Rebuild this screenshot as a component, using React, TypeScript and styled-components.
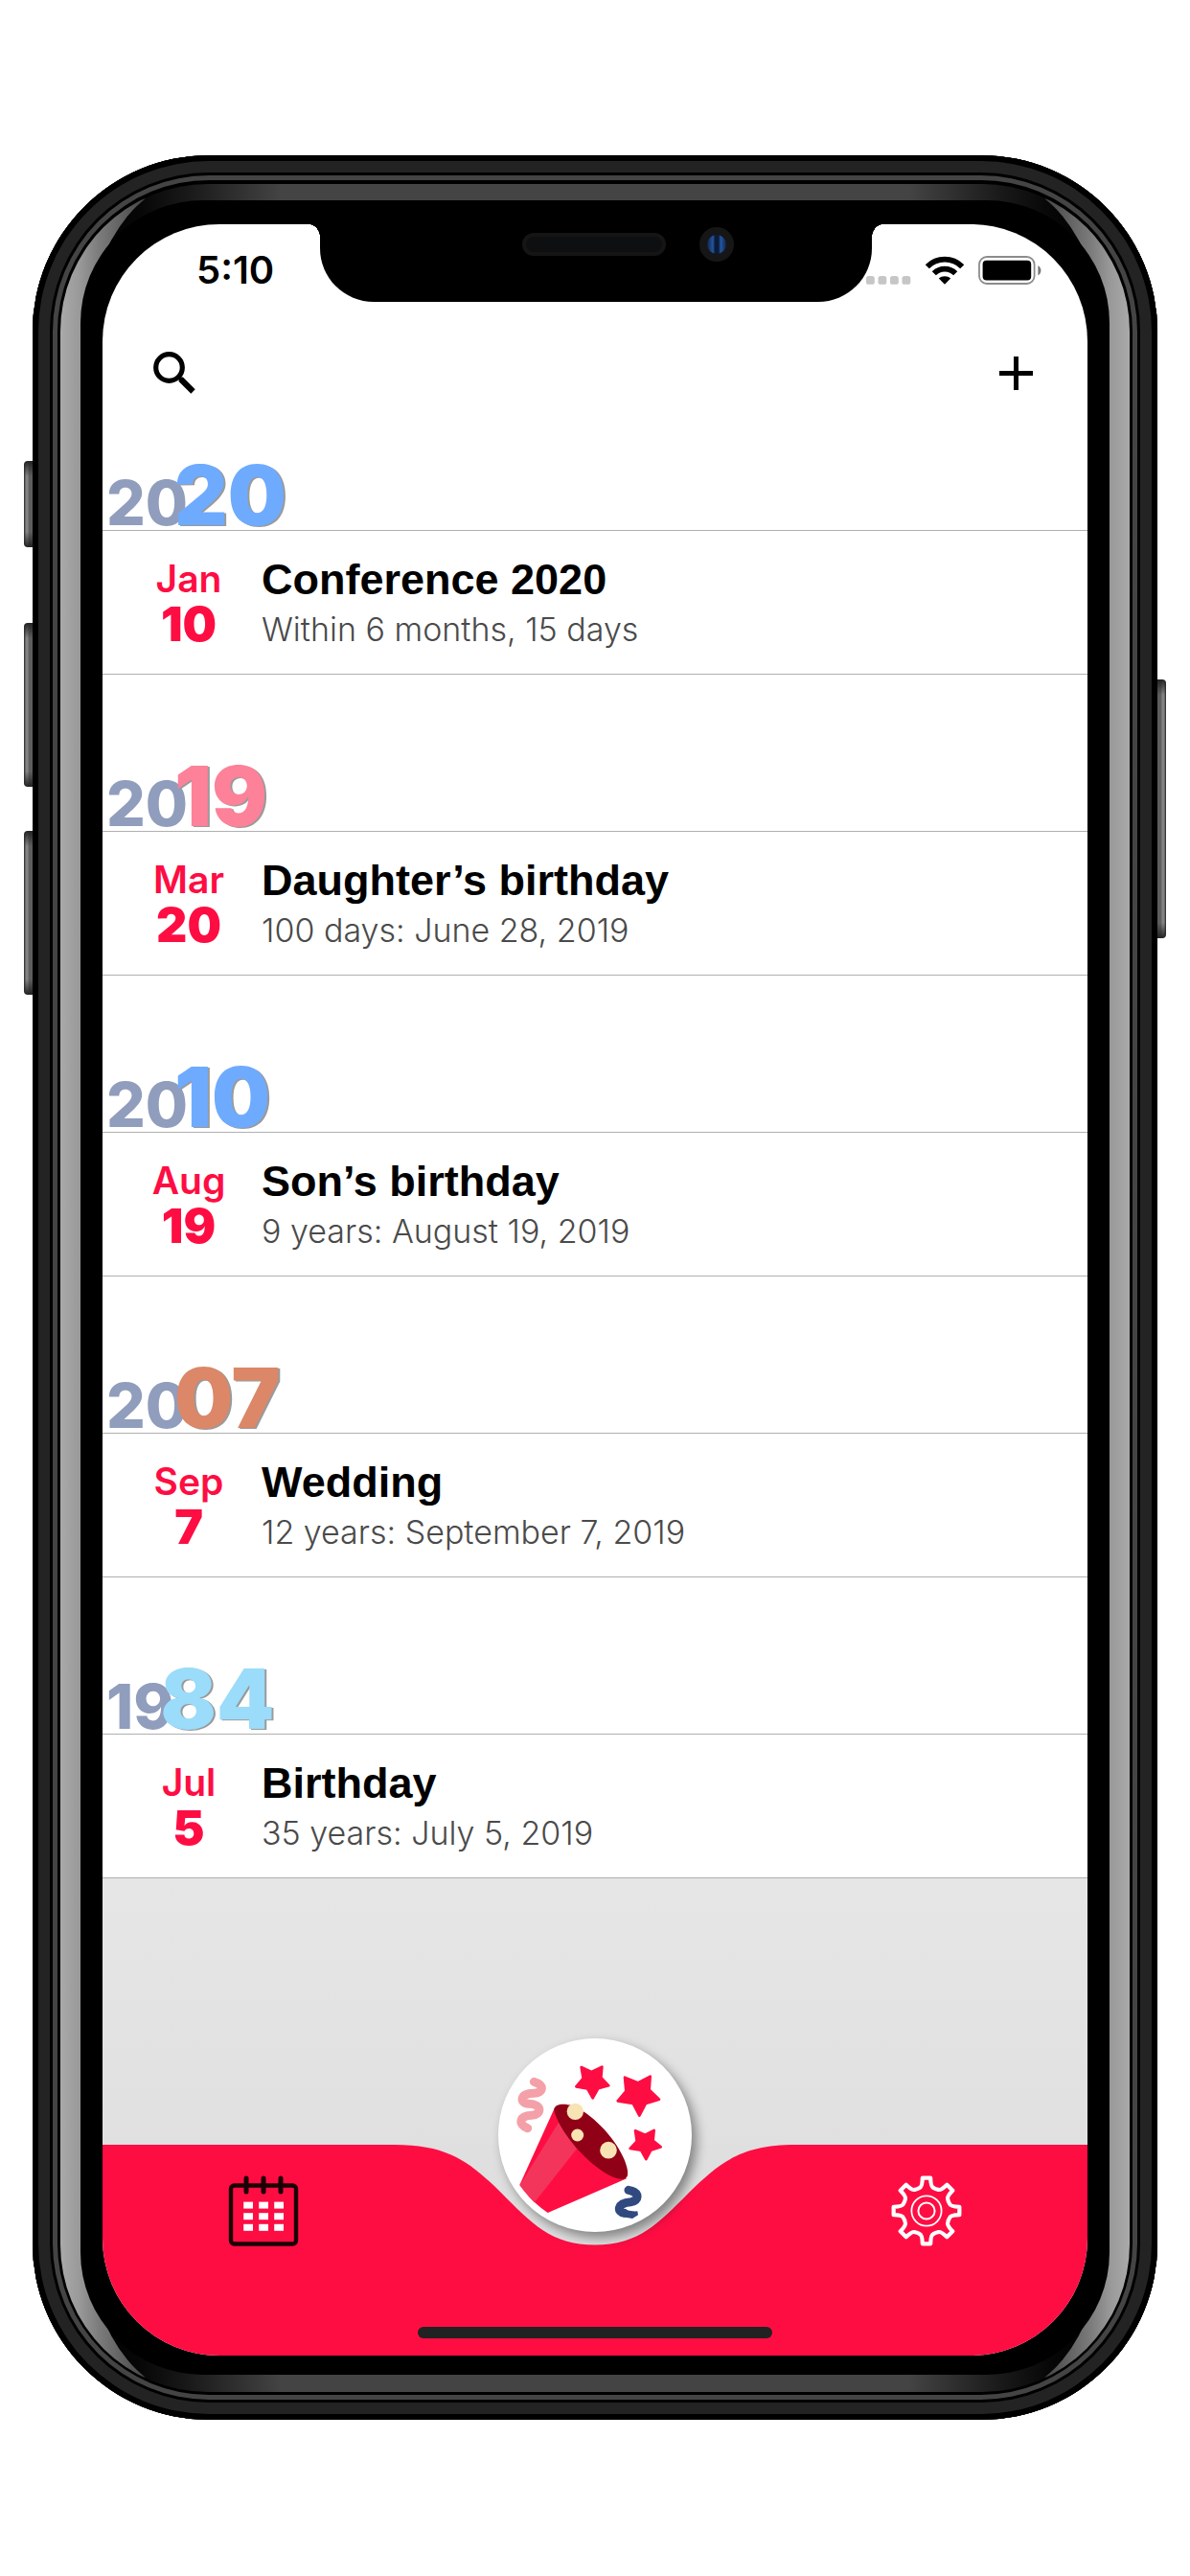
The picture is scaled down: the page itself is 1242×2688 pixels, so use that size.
import React from "react";
import styled, { createGlobalStyle } from "styled-components";

const RED = "#fe0d43";
const UI = `Inter, "Liberation Sans", sans-serif`;
const HELV = `"Liberation Sans", Arial, sans-serif`;

const GlobalStyle = createGlobalStyle`
  *, *::before, *::after { box-sizing: border-box; }
  body { margin: 0; background: #fff; }
  h2, h3, p, ul { margin: 0; padding: 0; }
  ul { list-style: none; }
  button { border: 0; padding: 0; background: none; cursor: pointer; }
  svg { display: block; }
`;

/* ---------- device ---------- */

const Page = styled.div`
  display: flex;
  justify-content: center;
  padding: 162px 34px;
`;

const Device = styled.div`
  position: relative;
  width: 100%;
  max-width: 1174px;
  padding: 72px 73px 67px;
  border-radius: 184px;
  background: #000;
  box-shadow: inset 0 0 0 6px #000, inset 0 0 0 18px #232323, inset 0 0 0 21px #000,
    inset 0 0 0 26px #444, inset 0 0 0 30px #000;
`;

/* Polished rim: bright on the long sides, tapering off into the corners. */
const Gloss = styled.div`
  position: absolute;
  inset: 30px 29px 29px;
  overflow: hidden;
  border-radius: 154px;
  background: linear-gradient(
    to right,
    #aaa 0, #999 20px, #7c7c7c 40px, #484848 86px, #000 90px,
    #000 calc(100% - 90px), #484848 calc(100% - 86px), #7c7c7c calc(100% - 40px),
    #999 calc(100% - 20px), #aaa 100%
  );
  &::before {
    content: "";
    position: absolute;
    inset: 0 21px;
    border-radius: 110px / 200px;
    background: linear-gradient(
      to right,
      #000 0, #060606 60px, #181818 110px, #444 210px,
      #444 calc(100% - 210px), #181818 calc(100% - 110px), #060606 calc(100% - 60px), #000 100%
    );
  }
`;

const Bezel = styled.div`
  position: absolute;
  inset: 47px 50px;
  border-radius: 128px;
  background: #000;
`;

const SideKey = styled.span<{ $side: "left" | "right"; $top: number; $length: number }>`
  position: absolute;
  top: ${(p) => p.$top}px;
  ${(p) => p.$side}: -9px;
  width: 9px;
  height: ${(p) => p.$length}px;
  border-radius: ${(p) => (p.$side === "left" ? "4px 0 0 4px" : "0 4px 4px 0")};
  background: linear-gradient(#222 0, transparent 16px, transparent calc(100% - 16px), #222 100%),
    linear-gradient(to ${(p) => p.$side}, #5c5c5c 0, #606060 4px, #858585 5px, #808080 7px, #222 9px);
`;

const Screen = styled.main`
  position: relative;
  display: flex;
  flex-direction: column;
  overflow: hidden;
  border-radius: 122px;
  background: #fff;
`;

/* ---------- status bar and notch ---------- */

const StatusBar = styled.header`
  position: relative;
  display: flex;
  justify-content: space-between;
  align-items: center;
  height: 81px;
  padding: 14px 48px 0 98px;
`;

const Clock = styled.time`
  font: 600 40px/48px ${UI};
  color: #000;
`;

const StatusIcons = styled.div`
  display: flex;
  align-items: center;
  gap: 15px;
`;

const Notch = styled.div`
  position: absolute;
  top: 0;
  left: 50%;
  width: 576px;
  height: 81px;
  margin-left: -287px;
  border-radius: 0 0 56px 56px;
  background: #000;
  &::before,
  &::after {
    content: "";
    position: absolute;
    top: 0;
    width: 12px;
    height: 14px;
  }
  &::before {
    right: 100%;
    background: radial-gradient(ellipse 12px 14px at 0 100%, transparent 98%, #000 100%);
  }
  &::after {
    left: 100%;
    background: radial-gradient(ellipse 12px 14px at 100% 100%, transparent 98%, #000 100%);
  }
`;

const Speaker = styled.span`
  position: absolute;
  top: 9px;
  left: 211px;
  width: 150px;
  height: 24px;
  border: 4px solid #151515;
  border-radius: 12px;
  background: #0e0f11;
`;

const Camera = styled.span`
  position: absolute;
  top: 3px;
  left: 396px;
  width: 36px;
  height: 36px;
  border: 8px solid #161616;
  border-radius: 50%;
  background: linear-gradient(to right, #0f2448 0, #2455a0 30%, #0a1a38 42%, #0a1a38 58%, #2455a0 72%, #0f2448 100%);
`;

/* ---------- toolbar ---------- */

const Toolbar = styled.div`
  display: flex;
  justify-content: space-between;
  align-items: center;
  height: 148px;
  padding: 0 53px;
`;

/* ---------- event list ---------- */

const List = styled.div`
  display: flex;
  flex-direction: column;
  gap: 73px;
`;

const YearHeader = styled.h2`
  display: flex;
  flex-direction: column;
  justify-content: flex-end;
  height: 91px;
  padding-left: 4px;
  border-bottom: 1px solid #b0b0b0;
  font: 900 86px/72px ${UI};
`;

const Century = styled.span`
  font-size: 64px;
  font-weight: 800;
  line-height: 48px;
  color: #909dbc;
`;

const Decade = styled.span<{ $color: string }>`
  position: relative;
  margin-left: -14px;
  color: ${(p) => p.$color};
  text-shadow: 2px 1px 0 #9a9a9a;
`;

const EventRow = styled.li`
  display: flex;
  gap: 26px;
  height: 150px;
  padding: 27px 40px 0;
  border-bottom: 1px solid #b0b0b0;
`;

const DateBox = styled.time`
  display: flex;
  flex-direction: column;
  align-items: center;
  width: 100px;
  font-family: ${UI};
  color: ${RED};
`;

const Month = styled.span`
  font-size: 39px;
  font-weight: 600;
  line-height: 46px;
`;

const Day = styled.span`
  font-size: 50px;
  font-weight: 900;
  line-height: 48px;
`;

const Title = styled.h3`
  font: 700 45px/48px ${HELV};
  color: #000;
`;

const Detail = styled.p`
  font: 300 34px/56px ${UI};
  color: #4a4a4a;
`;

const Filler = styled.div`
  height: 278px;
  background: linear-gradient(#e6e6e6, #e0e0e0);
`;

/* ---------- tab bar ---------- */

const TabBar = styled.nav`
  position: relative;
  display: flex;
  flex-direction: column;
  justify-content: space-between;
  align-items: center;
  height: 220px;
  padding-bottom: 18px;
  background: ${RED};
`;

const Dip = styled.svg`
  position: absolute;
  top: 0;
  left: 50%;
  margin-left: -209px;
`;

const Tabs = styled.ul`
  position: relative;
  display: flex;
  justify-content: space-between;
  align-items: flex-start;
  width: 100%;
  padding: 0 131px;
`;

const Tab = styled.li`
  padding-top: 31px;
`;

const CenterTab = styled.li`
  height: 90px;
  margin-top: -111px;
`;

const PartyButton = styled.button`
  width: 202px;
  height: 202px;
  border-radius: 50%;
  background: #fff;
  overflow: hidden;
  box-shadow: 5px 6px 12px rgba(0, 0, 0, 0.42);
`;

const HomeIndicator = styled.span`
  width: 370px;
  height: 12px;
  border-radius: 6px;
  background: #222;
`;

/* ---------- drawings ---------- */

const SignalDots = () => (
  <svg width="47" height="30" viewBox="0 0 47 30" fill="#c6c6c6" aria-hidden="true">
    {[0, 12.5, 25, 37.5].map((x) => (
      <rect key={x} x={x} y="21" width="8.8" height="8.8" rx="2.6" />
    ))}
  </svg>
);

const Wifi = () => (
  <svg width="40" height="30" viewBox="0 0 40 30" aria-hidden="true">
    <g fill="none" stroke="#000" strokeWidth="5.8">
      <path d="M1.8 11.2A25.6 25.6 0 0 1 38.2 11.2" />
      <path d="M8.8 18.2A15.8 15.8 0 0 1 31.2 18.2" />
    </g>
    <path d="M20 29.8L13.8 23.6C17.2 20.4 22.8 20.4 26.2 23.6Z" />
  </svg>
);

const Battery = () => (
  <svg width="66" height="30" viewBox="0 0 66 30" aria-hidden="true">
    <rect x="1" y="1" width="57.6" height="28" rx="8" fill="none" stroke="#8c8c8c" strokeWidth="1.8" />
    <rect x="4.6" y="4.8" width="50.6" height="20.8" rx="4" />
    <path d="M62.4 10.2C66.4 12 66.4 18.4 62.4 20.2Z" fill="#777" />
  </svg>
);

const SearchIcon = () => (
  <svg width="44" height="44" viewBox="0 0 44 44" fill="none" stroke="#000" aria-hidden="true">
    <circle cx="16.5" cy="16.5" r="13.8" strokeWidth="5.2" />
    <path d="M28.500 28.500L41.500 41.500" strokeWidth="6.2" />
    <path d="M26 26L30 30" strokeWidth="4" />
  </svg>
);

const PlusIcon = () => (
  <svg width="44" height="44" viewBox="0 0 44 44" stroke="#000" strokeWidth="5" aria-hidden="true">
    <path d="M22.5 5V40M5 22.5H40" />
  </svg>
);

const CalendarIcon = () => (
  <svg width="74" height="76" viewBox="0 0 74 76" aria-hidden="true">
    <rect x="3" y="11.5" width="68" height="61" rx="3.5" fill="none" stroke="#1a0006" strokeWidth="4.4" />
    <path d="M19 4V18M37 4V18M55 4V18" stroke="#1a0006" strokeWidth="5" strokeLinecap="round" />
    {[28.6, 40.2, 51.8].map((y) =>
      [16.2, 32.2, 48.2].map((x) => (
        <rect key={`${x}-${y}`} x={x} y={y} width="9.8" height="7" fill="#fff" />
      ))
    )}
  </svg>
);

function gearPath(c: number) {
  const at = (r: number, deg: number) => {
    const a = (deg * Math.PI) / 180;
    return `${(c + r * Math.sin(a)).toFixed(2)} ${(c - r * Math.cos(a)).toFixed(2)}`;
  };
  let d = "";
  for (let i = 0; i < 8; i++) {
    const t = i * 45;
    d += `${i === 0 ? "M" : "L"}${at(34.6, t - 7)}L${at(34.6, t + 7)}`;
    d += `C${at(29, t + 8.5)} ${at(25.4, t + 12)} ${at(25.2, t + 17)}`;
    d += `Q${at(24.6, t + 22.5)} ${at(25.2, t + 28)}`;
    d += `C${at(25.4, t + 33)} ${at(29, t + 36.5)} ${at(34.6, t + 38)}`;
  }
  return d + "Z";
}

const GearIcon = () => (
  <svg width="74" height="76" viewBox="0 -1 74 76" fill="none" stroke="#fff" aria-hidden="true">
    <path d={gearPath(37)} strokeWidth="4.2" strokeLinejoin="round" />
    <circle cx="37" cy="37" r="15.6" strokeWidth="1.8" />
    <circle cx="37" cy="37" r="8.6" strokeWidth="2" />
  </svg>
);

const PartyIcon = () => (
  <svg width="202" height="202" viewBox="120 141 606 606" aria-hidden="true">
    <path d="M297 358L187 600Q228 656 275 687L522 580Z" fill={RED} />
    <path d="M309 404L188 600Q208 630 233 655L366 487Z" fill="#f3355c" />
    <path
      d="M295 364C297 346 325 344 352 352C410 374 480 446 511 512C524 540 527 558 525 570C520 588 492 584 462 566C400 530 345 466 316 416C302 390 296 374 295 364Z"
      fill="#900016"
    />
    <g fill="#f8e3b4">
      <circle cx="361" cy="370" r="26" />
      <circle cx="368" cy="444" r="19.5" />
      <circle cx="465" cy="491" r="26.5" />
    </g>
    <g fill={RED} stroke={RED} strokeWidth="8" strokeLinejoin="round">
      <path d="M445 230L442 264L466 289L433 298L416 328L399 298L364 292L386 266L380 231L412 246Z" />
      <path d="M596 260L593 302L624 332L582 345L562 383L542 345L494 337L520 306L516 263L557 280Z" />
      <path d="M608 429L605 461L629 481L598 491L583 519L567 491L533 486L554 463L549 430L580 443Z" />
    </g>
    <path
      d="M232 277C266 286 262 312 232 313C186 312 186 345 216 346C260 347 256 380 225 382C184 383 182 411 212 422"
      fill="none"
      stroke="#f4a0a8"
      strokeWidth="27"
      strokeLinecap="round"
    />
    <path
      d="M528 616C564 622 562 650 535 653C490 656 492 686 515 688"
      fill="none"
      stroke="#30497f"
      strokeWidth="27"
      strokeLinecap="round"
    />
    <path d="M510 675Q535 684 556 682L558 694L540 705L510 700Z" fill="#30497f" />
  </svg>
);

/* ---------- data ---------- */

interface LifeEvent {
  year: string;
  color: string;
  month: string;
  day: string;
  iso: string;
  title: string;
  detail: string;
}

const events: LifeEvent[] = [
  { year: "2020", color: "#6eabff", month: "Jan", day: "10", iso: "2020-01-10", title: "Conference 2020", detail: "Within 6 months, 15 days" },
  { year: "2019", color: "#fd8198", month: "Mar", day: "20", iso: "2019-03-20", title: "Daughter’s birthday", detail: "100 days: June 28, 2019" },
  { year: "2010", color: "#6eabff", month: "Aug", day: "19", iso: "2010-08-19", title: "Son’s birthday", detail: "9 years: August 19, 2019" },
  { year: "2007", color: "#db8768", month: "Sep", day: "7", iso: "2007-09-07", title: "Wedding", detail: "12 years: September 7, 2019" },
  { year: "1984", color: "#9adcfa", month: "Jul", day: "5", iso: "1984-07-05", title: "Birthday", detail: "35 years: July 5, 2019" },
];

export default function App() {
  return (
    <>
      <GlobalStyle />
      <Page>
        <Device>
          <SideKey $side="left" $top={319} $length={90} />
          <SideKey $side="left" $top={488} $length={171} />
          <SideKey $side="left" $top={705} $length={171} />
          <SideKey $side="right" $top={547} $length={270} />
          <Gloss />
          <Bezel />
          <Screen>
            <StatusBar>
              <Clock>5:10</Clock>
              <StatusIcons>
                <SignalDots />
                <Wifi />
                <Battery />
              </StatusIcons>
              <Notch>
                <Speaker />
                <Camera />
              </Notch>
            </StatusBar>
            <Toolbar>
              <button type="button" aria-label="Search"><SearchIcon /></button>
              <button type="button" aria-label="Add event"><PlusIcon /></button>
            </Toolbar>
            <List>
              {events.map((e) => (
                <section key={e.year}>
                  <YearHeader>
                    <div>
                      <Century>{e.year.slice(0, 2)}</Century>
                      <Decade $color={e.color}>{e.year.slice(2)}</Decade>
                    </div>
                  </YearHeader>
                  <ul>
                    <EventRow>
                      <DateBox dateTime={e.iso}>
                        <Month>{e.month}</Month>
                        <Day>{e.day}</Day>
                      </DateBox>
                      <div>
                        <Title>{e.title}</Title>
                        <Detail>{e.detail}</Detail>
                      </div>
                    </EventRow>
                  </ul>
                </section>
              ))}
            </List>
            <Filler />
            <TabBar>
              <Dip width="418" height="106" viewBox="0 0 418 106" aria-hidden="true">
                <path d="M0 0C58 0 80 20 111 50C143 82 163 104.500 209 104.500C255 104.500 275 82 307 50C338 20 360 0 418 0Z" fill="#dfdfdf" />
              </Dip>
              <Tabs>
                <Tab>
                  <button type="button" aria-label="Calendar"><CalendarIcon /></button>
                </Tab>
                <CenterTab>
                  <PartyButton type="button" aria-label="Celebrations"><PartyIcon /></PartyButton>
                </CenterTab>
                <Tab>
                  <button type="button" aria-label="Settings"><GearIcon /></button>
                </Tab>
              </Tabs>
              <HomeIndicator />
            </TabBar>
          </Screen>
        </Device>
      </Page>
    </>
  );
}
